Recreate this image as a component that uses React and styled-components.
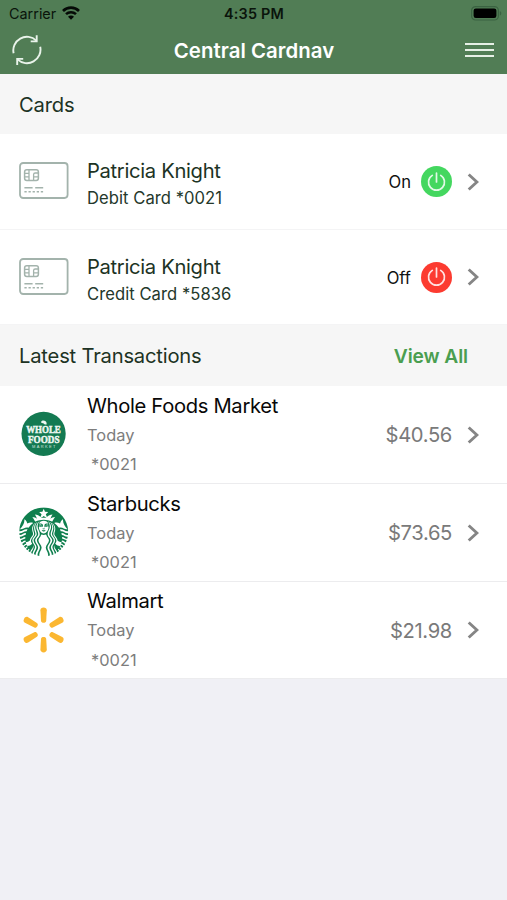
import React from 'react'
import styled, { createGlobalStyle } from 'styled-components'
import { SiStarbucks } from 'react-icons/si'

const cards = [
  { id: 1, owner: 'Patricia Knight', label: 'Debit Card *0021', active: true },
  { id: 2, owner: 'Patricia Knight', label: 'Credit Card *5836', active: false },
]

const RefreshIcon = () => (
  <svg width="30" height="32" viewBox="0 0 30 32" fill="none" stroke="#e9f3ea" strokeWidth="1.9">
    <path d="M1.6 19.3A13.6 13.6 0 0 1 24.3 6.6" />
    <path d="M18.7 7.4h6V1.2" />
    <path d="M28.2 12.7A13.6 13.6 0 0 1 5.5 25.4" />
    <path d="M11.2 24.9h-6v6.2" />
  </svg>
)

const WifiIcon = () => (
  <svg width="18" height="14" viewBox="0 0 18 14" fill="none" stroke="#050a06">
    <path d="M1 4.9a11.6 11.6 0 0 1 16 0" strokeWidth="2.7" />
    <path d="M4 8.2a7.2 7.2 0 0 1 10 0" strokeWidth="2.5" />
    <path d="M9 13.7L6 10.7a4.2 4.2 0 0 1 6 0z" fill="#050a06" stroke="none" />
  </svg>
)

const BatteryIcon = () => (
  <svg width="31" height="15" viewBox="0 0 31 15">
    <rect x="0.6" y="0.6" width="26.8" height="13.4" rx="4" fill="none" stroke="#3b6342" strokeWidth="1.2" />
    <rect x="2.6" y="2.6" width="22.8" height="9.4" rx="2.2" fill="#000" />
    <path d="M28.8 5v4.6c1-.4 1.5-1.3 1.5-2.3s-.5-1.9-1.5-2.3z" fill="#3b6342" />
  </svg>
)

const CardIcon = () => (
  <svg width="50" height="38" viewBox="0 0 50 38" fill="none" stroke="#a3b3ac">
    <rect x="1" y="1" width="47.6" height="35" rx="3.2" strokeWidth="1.8" />
    <rect x="5.6" y="7.8" width="13.8" height="10.6" rx="2.2" strokeWidth="1.5" />
    <path d="M5.6 11.4h4.4M5.6 14.8h4.4M10 7.8v10.6M14.6 18.4v-5.8q0-1.6 1.6-1.6h3.2M14.6 14.8h4.8" strokeWidth="1.3" />
    <path d="M5.4 25.7h8.2M16.2 25.7h8" strokeWidth="1.5" />
    <path d="M5.4 29.8h18.8" strokeWidth="1.5" strokeDasharray="2.3 1.8" />
  </svg>
)

const PowerIcon = () => (
  <svg width="19" height="20" viewBox="0 0 19 20" fill="none" stroke="#fff" strokeOpacity="0.85" strokeWidth="1.7" strokeLinecap="round">
    <path d="M5.3 3.4a8 8 0 1 0 8.4 0" />
    <path d="M9.5 1v9" />
  </svg>
)

const ChevronIcon = () => (
  <svg width="12" height="18" viewBox="0 0 12 18" fill="none" stroke="#858585" strokeWidth="2.9">
    <path d="M1.7 1.5L9.9 9l-8.2 7.5" />
  </svg>
)

const WholeFoodsLogo = () => (
  <svg width="50" height="50" viewBox="0 0 50 50" fill="#eef7f2">
    <circle cx="24.6" cy="24.8" r="22.1" fill="#147a52" />
    <g fontFamily="'Liberation Serif', serif" fontWeight="700">
      <text x="7.2" y="24.4" fontSize="10.4" textLength="34.6" lengthAdjust="spacingAndGlyphs" stroke="#eef7f2" strokeWidth="0.5">WHOLE</text>
      <text x="9" y="33.6" fontSize="10.4" textLength="31.6" lengthAdjust="spacingAndGlyphs" stroke="#eef7f2" strokeWidth="0.5">FOODS</text>
    </g>
    <text x="13" y="38.6" fontSize="4" textLength="23.4" fontFamily="'Liberation Sans', sans-serif" fillOpacity="0.85">MARKET</text>
    <path d="M22 13.2c.2-1.8 3-2.4 4.6-.9 1 .9 1.2 2.2 1 3.2-1.6.4-2.8-.2-3.4-1.4-.8.2-1.6 0-2.2-.9z" />
  </svg>
)

const StarbucksLogo = () => (
  <svg width="50" height="50" viewBox="0 0 50 50">
    <SiStarbucks x="0.2" y="0.2" size={49} color="#0f7f4e" />
  </svg>
)

const sparkAngles = [0, 60, 120, 180, 240, 300]

const WalmartLogo = () => (
  <svg width="50" height="50" viewBox="0 0 50 50" fill="#fbb731">
    {sparkAngles.map((angle) => (
      <path
        key={angle}
        transform={`rotate(${angle} 24.6 24.9)`}
        d="M21.4 5.2c0-1.9 1.4-2.8 3.2-2.8s3.2.9 3.2 2.8l-.6 10.5c-.1 1.4-1.2 2-2.6 2s-2.5-.6-2.6-2z"
      />
    ))}
  </svg>
)

const transactions = [
  { id: 1, merchant: 'Whole Foods Market', date: 'Today', card: '*0021', amount: '$40.56', logo: WholeFoodsLogo },
  { id: 2, merchant: 'Starbucks', date: 'Today', card: '*0021', amount: '$73.65', logo: StarbucksLogo },
  { id: 3, merchant: 'Walmart', date: 'Today', card: '*0021', amount: '$21.98', logo: WalmartLogo },
]

const App = () => {
  return (
    <Screen>
      <GlobalStyle />
      <Header>
        <StatusBar>
          <Carrier>
            Carrier
            <WifiIcon />
          </Carrier>
          <Time>4:35 PM</Time>
          <Battery>
            <BatteryIcon />
          </Battery>
        </StatusBar>
        <NavBar>
          <RefreshButton aria-label="Refresh">
            <RefreshIcon />
          </RefreshButton>
          <NavTitle>Central Cardnav</NavTitle>
          <MenuButton aria-label="Menu">
            <MenuLine />
            <MenuLine />
            <MenuLine />
          </MenuButton>
        </NavBar>
      </Header>
      <SectionHeader $height="60px">
        <SectionTitle>Cards</SectionTitle>
      </SectionHeader>
      {cards.map((card) => (
        <CardRow key={card.id}>
          <CardImage>
            <CardIcon />
          </CardImage>
          <CardInfo>
            <CardOwner>{card.owner}</CardOwner>
            <CardLabel>{card.label}</CardLabel>
          </CardInfo>
          <CardStatus>{card.active ? 'On' : 'Off'}</CardStatus>
          <PowerButton $active={card.active}>
            <PowerIcon />
          </PowerButton>
          <ChevronIcon />
        </CardRow>
      ))}
      <SectionHeader $height="61px">
        <SectionTitle>Latest Transactions</SectionTitle>
        <ViewAll>View All</ViewAll>
      </SectionHeader>
      {transactions.map(({ id, merchant, date, card, amount, logo: Logo }) => (
        <TransactionRow key={id}>
          <LogoWrap>
            <Logo />
          </LogoWrap>
          <TransactionInfo>
            <Merchant>{merchant}</Merchant>
            <TransactionDate>{date}</TransactionDate>
            <TransactionCard>{card}</TransactionCard>
          </TransactionInfo>
          <Amount>{amount}</Amount>
          <ChevronIcon />
        </TransactionRow>
      ))}
    </Screen>
  )
}

const GlobalStyle = createGlobalStyle`
  * {
    box-sizing: border-box;
  }
  body {
    margin: 0;
    background: #f0f0f5;
    font-family: Inter, 'Liberation Sans', sans-serif;
  }
  svg {
    display: block;
    flex-shrink: 0;
  }
  button {
    border: 0;
    padding: 0;
    background: none;
    font-family: inherit;
  }
`

const Screen = styled.div`
  width: 100%;
  min-height: 900px;
  background: #f0f0f5;
`

const Header = styled.header`
  height: 74px;
  background: #517d55;
`

const StatusBar = styled.div`
  height: 26px;
  padding: 1px 8px 0 9px;
  display: grid;
  grid-template-columns: 1fr auto 1fr;
  align-items: center;
  font-size: 14.4px;
  color: #0a140b;
`

const Carrier = styled.div`
  display: flex;
  align-items: center;
  gap: 6px;
  svg {
    margin-top: -2px;
  }
`

const Time = styled.div`
  font-weight: 600;
  letter-spacing: 0.2px;
`

const Battery = styled.div`
  display: flex;
  justify-content: flex-end;
  margin-right: -3px;
`

const NavBar = styled.div`
  height: 48px;
  padding: 0 13px 0 14px;
  display: grid;
  grid-template-columns: 1fr auto 1fr;
  align-items: center;
`

const RefreshButton = styled.button`
  justify-self: start;
  margin-left: -2px;
`

const NavTitle = styled.h1`
  margin: 0;
  font-size: 20.4px;
  font-weight: 600;
  letter-spacing: 0.05px;
  color: #fff;
`

const MenuButton = styled.button`
  width: 29px;
  display: flex;
  flex-direction: column;
  gap: 4px;
  justify-self: end;
`

const MenuLine = styled.span`
  height: 2px;
  width: 100%;
  background: #e6f0e6;
`

const SectionHeader = styled.div`
  height: ${({ $height }) => $height};
  padding: 0 39px 0 19px;
  display: flex;
  align-items: center;
  justify-content: space-between;
  background: #f6f6f6;
`

const SectionTitle = styled.h2`
  margin: 0;
  font-size: 20.2px;
  font-weight: 400;
  letter-spacing: -0.2px;
  color: #1d3324;
`

const ViewAll = styled.button`
  font-size: 19.2px;
  font-weight: 600;
  letter-spacing: -0.1px;
  color: #4a9e50;
`

const Row = styled.div`
  padding: 0 28px 0 19px;
  display: flex;
  align-items: center;
  background: #fff;
`

const CardRow = styled(Row)`
  height: 95.5px;
  padding-top: 1px;
  border-bottom: 1px solid #f4f4f5;
`

const CardImage = styled.div`
  width: 68px;
  padding-bottom: 1px;
`

const CardInfo = styled.div`
  flex: 1;
  padding-top: 6px;
`

const CardOwner = styled.div`
  font-size: 20.2px;
  line-height: 28px;
  letter-spacing: -0.32px;
  color: #1d3324;
`

const CardLabel = styled.div`
  font-size: 16.6px;
  line-height: 27.4px;
  letter-spacing: 0.05px;
  color: #24382b;
`

const CardStatus = styled.div`
  padding-top: 1px;
  font-size: 16.6px;
  color: #101010;
`

const PowerButton = styled.button`
  width: 31px;
  height: 31px;
  margin: 0 15px 0 10px;
  display: flex;
  align-items: center;
  justify-content: center;
  border-radius: 50%;
  background: ${({ $active }) => ($active ? '#44d75f' : '#fc3b30')};
`

const TransactionRow = styled(Row)`
  height: 97.8px;
  padding-top: 1px;
  border-bottom: 1px solid #ececee;
`

const LogoWrap = styled.div`
  width: 68px;
  padding-bottom: 1px;
`

const TransactionInfo = styled.div`
  flex: 1;
`

const Merchant = styled.div`
  font-size: 20.2px;
  line-height: 31px;
  letter-spacing: -0.32px;
  color: #080808;
`

const TransactionDate = styled.div`
  font-size: 16.4px;
  line-height: 29.5px;
  color: #7d7d7d;
`

const TransactionCard = styled(TransactionDate)`
  padding-left: 4px;
`

const Amount = styled.div`
  margin-right: 15px;
  font-size: 20.2px;
  letter-spacing: -0.35px;
  color: #7a7a7a;
`

export default App
